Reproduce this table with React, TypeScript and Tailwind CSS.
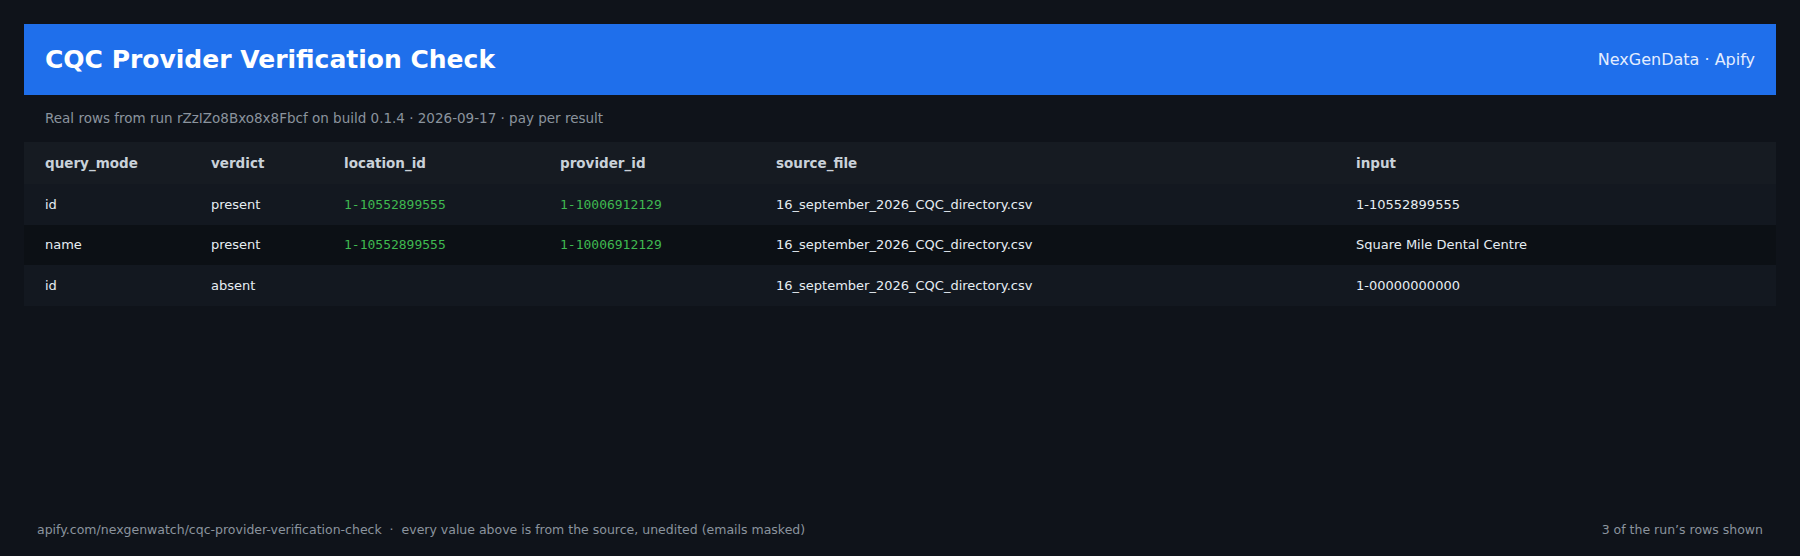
const columns = ['query_mode', 'verdict', 'location_id', 'provider_id', 'source_file', 'input']

type Row = {
  query_mode: string
  verdict: string
  location_id: string
  provider_id: string
  source_file: string
  input: string
}

const rows: Row[] = [
  {
    query_mode: 'id',
    verdict: 'present',
    location_id: '1-10552899555',
    provider_id: '1-10006912129',
    source_file: '16_september_2026_CQC_directory.csv',
    input: '1-10552899555'
  },
  {
    query_mode: 'name',
    verdict: 'present',
    location_id: '1-10552899555',
    provider_id: '1-10006912129',
    source_file: '16_september_2026_CQC_directory.csv',
    input: 'Square Mile Dental Centre'
  },
  {
    query_mode: 'id',
    verdict: 'absent',
    location_id: '',
    provider_id: '',
    source_file: '16_september_2026_CQC_directory.csv',
    input: '1-00000000000'
  }
]

function IdCell({value}: {value: string}) {
  return (
    <td className="px-[21px] font-['DejaVu_Sans_Mono',monospace] text-[13px] text-[#3fb950]">
      {value}
    </td>
  )
}

export default function App() {
  return (
    <div className="h-screen flex flex-col bg-[#0f131a] font-['DejaVu_Sans',sans-serif]">
      <div className="flex-1 px-6 pt-6">
        <header className="h-[71px] flex items-center justify-between px-[21px] bg-[#1f6feb]">
          <h1 className="text-[25px] font-bold text-white">
            CQC Provider Verification Check
          </h1>
          <span className="text-[16px] text-[#e3edff]">NexGenData · Apify</span>
        </header>

        <p className="h-[47px] flex items-center px-[21px] text-[13.5px] text-[#8b949e]">
          Real rows from run rZzIZo8Bxo8x8Fbcf on build 0.1.4 · 2026-09-17 · pay
          per result
        </p>

        <table className="w-full table-fixed border-collapse text-left">
          <colgroup>
            <col className="w-[166px]" />
            <col className="w-[133px]" />
            <col className="w-[216px]" />
            <col className="w-[216px]" />
            <col className="w-[580px]" />
            <col />
          </colgroup>
          <thead>
            <tr className="h-[42px] bg-[#161b22]">
              {columns.map(c => (
                <th
                  key={c}
                  className="px-[21px] text-[13.5px] font-bold text-[#c9d1d9]">
                  {c}
                </th>
              ))}
            </tr>
          </thead>
          <tbody className="text-[13px] text-[#e6edf3]">
            {rows.map((r, i) => (
              <tr
                key={i}
                className={
                  i % 2 === 1 ? 'h-[40px] bg-[#0c1015]' : 'h-[41px] bg-[#131820]'
                }>
                <td className="px-[21px]">{r.query_mode}</td>
                <td className="px-[21px]">{r.verdict}</td>
                <IdCell value={r.location_id} />
                <IdCell value={r.provider_id} />
                <td className="px-[21px]">{r.source_file}</td>
                <td className="px-[21px]">{r.input}</td>
              </tr>
            ))}
          </tbody>
        </table>
      </div>

      <footer className="h-[52px] flex items-center justify-between px-[37px] text-[12.5px] text-[#8b949e]">
        <span className="whitespace-pre">
          apify.com/nexgenwatch/cqc-provider-verification-check  ·  every value
          above is from the source, unedited (emails masked)
        </span>
        <span>3 of the run’s rows shown</span>
      </footer>
    </div>
  )
}
